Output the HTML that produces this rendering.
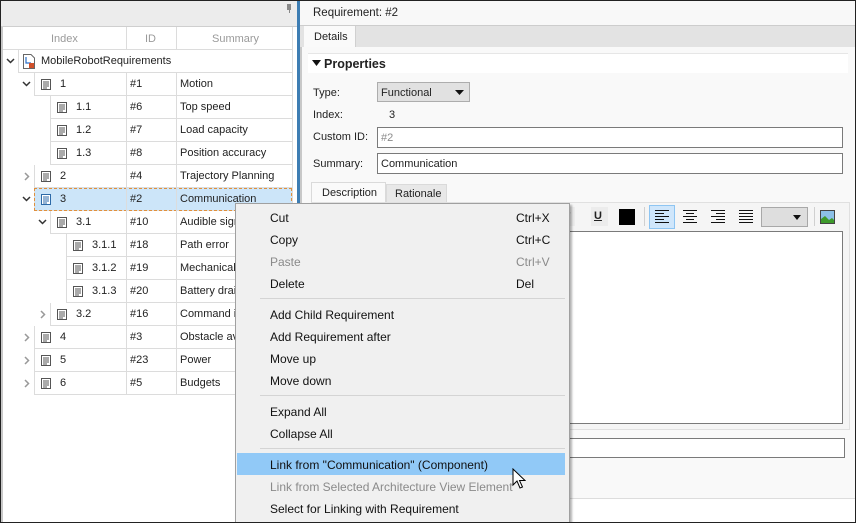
<!DOCTYPE html>
<html><head><meta charset="utf-8"><style>
*{margin:0;padding:0;box-sizing:border-box}
body{width:856px;height:523px;overflow:hidden;background:#fff;font-family:"Liberation Sans",sans-serif;font-size:11px;color:#222;position:relative}
.a{position:absolute}
.t{position:absolute;white-space:nowrap;line-height:14px}
.cell{position:absolute;height:23px;border:1px solid #dcdcdc;border-left:none;border-top:none}
.row{position:absolute;height:23px}
.mi{position:absolute;left:270px;font-size:12px;color:#111;white-space:nowrap;line-height:14px}
.sc{position:absolute;left:516px;font-size:12px;color:#111;line-height:14px}
.dis{color:#8a8a8a}
.sep{position:absolute;left:260px;width:305px;height:1px;background:#d4d4d4}
.inp{position:absolute;background:#fff;border:1px solid #7a7a7a}
</style></head><body>
<!-- outer border -->
<div class="a" style="left:0;top:0;width:856px;height:523px;border:1px solid #222;z-index:50;pointer-events:none"></div>

<!-- LEFT PANEL -->
<div class="a" style="left:1px;top:1px;width:296px;height:26px;background:#ececec;border-bottom:1px solid #cfcfcf"></div>
<div class="a" style="left:287px;top:4px;width:4px;height:6px;background:#888"></div>
<div class="a" style="left:288.5px;top:9px;width:1px;height:4px;background:#888"></div>
<div class="a" style="left:1px;top:27px;width:2px;height:495px;background:#c8c8c8"></div>
<div class="a" style="left:292px;top:27px;width:1px;height:495px;background:#dcdcdc"></div>
<div class="a" style="left:297px;top:0;width:3px;height:523px;background:#3d7db3"></div>

<!-- header -->
<div class="a" style="left:3px;top:27px;width:289px;height:23px;border-bottom:1px solid #dcdcdc"></div>
<div class="a" style="left:126px;top:27px;width:1px;height:23px;background:#dcdcdc"></div>
<div class="a" style="left:176px;top:27px;width:1px;height:23px;background:#dcdcdc"></div>
<div class="t" style="left:51px;top:32px;color:#9a9a9a">Index</div>
<div class="t" style="left:145px;top:32px;color:#9a9a9a">ID</div>
<div class="t" style="left:212px;top:32px;color:#9a9a9a">Summary</div>

<div id="tree"></div>

<!-- RIGHT PANEL -->
<div class="a" style="left:300px;top:0;width:556px;height:26px;background:#f8f8f8;border-bottom:1px solid #cdcdcd"></div>
<div class="t" style="left:313px;top:6px;font-size:11.5px">Requirement: #2</div>
<div class="a" style="left:300px;top:26px;width:556px;height:21px;background:#e3e3e3"></div>
<div class="a" style="left:304px;top:26px;width:52px;height:21px;background:#fafafa;border-right:1px solid #d0d0d0"></div>
<div class="t" style="left:314px;top:30px">Details</div>
<div class="a" style="left:300px;top:47px;width:556px;height:452px;background:#f9f9f9;border-left:2px solid #c8c8c8"></div>
<div class="a" style="left:308px;top:53px;width:540px;height:20px;background:#fff;border-top:1px solid #e6e6e6"></div>
<svg class="a" style="left:312px;top:60px" width="9" height="6"><path d="M0 0H9L4.5 6Z" fill="#111"/></svg>
<div class="t" style="left:324px;top:57px;font-weight:bold;font-size:12.5px">Properties</div>

<div class="t" style="left:313px;top:86px">Type:</div>
<div class="a" style="left:377px;top:82px;width:93px;height:20px;background:#e1e1e1;border:1px solid #adadad"></div>
<div class="t" style="left:381px;top:86px">Functional</div>
<svg class="a" style="left:455px;top:90px" width="9" height="5"><path d="M0 0H9L4.5 5Z" fill="#111"/></svg>
<div class="t" style="left:313px;top:108px">Index:</div>
<div class="t" style="left:389px;top:108px">3</div>
<div class="t" style="left:313px;top:130px">Custom ID:</div>
<div class="inp" style="left:377px;top:127px;width:466px;height:21px"></div>
<div class="t" style="left:381px;top:131px;color:#8a8a8a">#2</div>
<div class="t" style="left:313px;top:157px">Summary:</div>
<div class="inp" style="left:377px;top:153px;width:466px;height:21px"></div>
<div class="t" style="left:381px;top:157px">Communication</div>

<div class="a" style="left:311px;top:182px;width:75px;height:21px;background:#fafafa;border:1px solid #dadada;border-bottom:none"></div>
<div class="t" style="left:322px;top:186px">Description</div>
<div class="a" style="left:386px;top:184px;width:61px;height:19px;background:#e8e8e8;border:1px solid #dadada"></div>
<div class="t" style="left:395px;top:187px">Rationale</div>
<div class="a" style="left:311px;top:202px;width:539px;height:228px;background:#f5f5f5;border:1px solid #e0e0e0"></div>
<div class="a" style="left:312px;top:231px;width:531px;height:193px;background:#fff;border:1px solid #7a7a7a"></div>
<!-- toolbar -->
<div class="a" style="left:563px;top:207px;width:12px;height:19px;background:#ececec"></div>
<div class="t" style="left:567px;top:210px;font-weight:bold;font-style:italic">I</div>
<div class="a" style="left:591px;top:207px;width:17px;height:19px;background:#ececec"></div>
<div class="t" style="left:594px;top:209px;font-weight:bold;text-decoration:underline">U</div>
<div class="a" style="left:619px;top:209px;width:16px;height:16px;background:#000"></div>
<div class="a" style="left:644px;top:207px;width:1px;height:19px;background:#d0d0d0"></div>
<div class="a" style="left:649px;top:205px;width:26px;height:24px;background:#cfe6fb;border:1px solid #8ec5f2"></div>
<svg class="a" style="left:655px;top:210px" width="100" height="14">
<g stroke="#111" stroke-width="1"><path d="M0 .5H14M0 3.5H9M0 6.5H14M0 9.5H9M0 12.5H14"/>
<path d="M28 .5H42M31 3.5H39M28 6.5H42M31 9.5H39M28 12.5H42"/>
<path d="M56 .5H70M61 3.5H70M56 6.5H70M61 9.5H70M56 12.5H70"/>
<path d="M84 .5H98M84 3.5H98M84 6.5H98M84 9.5H98M84 12.5H98"/></g></svg>
<div class="a" style="left:761px;top:207px;width:47px;height:20px;background:#dedede;border:1px solid #a8a8a8"></div>
<svg class="a" style="left:793px;top:215px" width="8" height="5"><path d="M0 0H8L4 5Z" fill="#111"/></svg>
<div class="a" style="left:814px;top:207px;width:1px;height:19px;background:#d0d0d0"></div>
<div class="a" style="left:820px;top:210px;width:15px;height:14px;background:#8cc0e8;border:1px solid #444"></div>
<svg class="a" style="left:821px;top:215px" width="13" height="8"><path d="M0 8V4L4 1L8 5L11 3L13 5V8Z" fill="#3e9a2c"/></svg>

<div class="inp" style="left:560px;top:438px;width:285px;height:20px"></div>
<div class="a" style="left:300px;top:498px;width:556px;height:1px;background:#ddd"></div>
<div class="a" style="left:302px;top:499px;width:552px;height:24px;background:#fff"></div>

<!-- CONTEXT MENU -->
<div class="a" style="left:235px;top:203px;width:335px;height:320px;background:#f0f0f0;border:1px solid #a0a0a0;box-shadow:2px 2px 2px rgba(0,0,0,.3)"></div>
<div class="mi" style="top:211px">Cut</div><div class="sc" style="top:211px">Ctrl+X</div>
<div class="mi" style="top:233px">Copy</div><div class="sc" style="top:233px">Ctrl+C</div>
<div class="mi dis" style="top:255px">Paste</div><div class="sc dis" style="top:255px">Ctrl+V</div>
<div class="mi" style="top:277px">Delete</div><div class="sc" style="top:277px">Del</div>
<div class="sep" style="top:298px"></div>
<div class="mi" style="top:308px">Add Child Requirement</div>
<div class="mi" style="top:330px">Add Requirement after</div>
<div class="mi" style="top:352px">Move up</div>
<div class="mi" style="top:374px">Move down</div>
<div class="sep" style="top:395px"></div>
<div class="mi" style="top:405px">Expand All</div>
<div class="mi" style="top:427px">Collapse All</div>
<div class="sep" style="top:448px"></div>
<div class="a" style="left:237px;top:453px;width:328px;height:22px;background:#91c9f7"></div>
<div class="mi" style="top:458px">Link from "Communication" (Component)</div>
<div class="mi dis" style="top:480px">Link from Selected Architecture View Element</div>
<div class="mi" style="top:502px">Select for Linking with Requirement</div>
<svg class="a" style="left:512px;top:468px;z-index:20" width="14" height="22"><path d="M1 1V17L5 13L8 20L10.5 19L7.5 12.5H13Z" fill="#fff" stroke="#000" stroke-width="1"/></svg>

<script>
var rows=[
[0,'v','','MobileRobotRequirements','',0,1],
[1,'v','1','#1','Motion'],
[2,'','1.1','#6','Top speed'],
[2,'','1.2','#7','Load capacity'],
[2,'','1.3','#8','Position accuracy'],
[1,'>','2','#4','Trajectory Planning'],
[1,'v','3','#2','Communication',1],
[2,'v','3.1','#10','Audible signals'],
[3,'','3.1.1','#18','Path error'],
[3,'','3.1.2','#19','Mechanical'],
[3,'','3.1.3','#20','Battery drain'],
[2,'>','3.2','#16','Command i'],
[1,'>','4','#3','Obstacle av'],
[1,'>','5','#23','Power'],
[1,'>','6','#5','Budgets']];
var h='';
rows.forEach(function(r,i){
 var y=50+23*i,L=r[0],x=18+16*L;
 if(r[6]){
  h+='<div class="a" style="left:'+x+'px;top:'+y+'px;width:'+(292-x)+'px;height:23px;border:1px solid #dcdcdc;border-top:none;border-right:none"></div>';
  h+='<svg class="a" style="left:'+(x+5)+'px;top:'+(y+4)+'px" width="12" height="15"><path d="M.5 .5H8L11.5 4V14.5H.5Z" fill="#fff" stroke="#666"/><path d="M3 3V9H8" fill="none" stroke="#2a6fc9" stroke-width="1.2"/><rect x="6" y="9" width="5" height="5" fill="#d0502a"/></svg>';
  h+='<div class="t" style="left:'+(x+23)+'px;top:'+(y+4)+'px">'+r[3]+'</div>';
 } else {
  var bg=r[5]?'#cce5f9':'#fff';
  h+='<div class="a" style="left:'+x+'px;top:'+y+'px;width:'+(292-x)+'px;height:23px;background:'+bg+';border-left:1px solid #dcdcdc;border-bottom:1px solid #dcdcdc'+(r[5]?';outline:1px dashed #e0903c;outline-offset:-1px':'')+'"></div>';
  h+='<div class="a" style="left:126px;top:'+y+'px;width:1px;height:23px;background:#dcdcdc"></div>';
  h+='<div class="a" style="left:176px;top:'+y+'px;width:1px;height:23px;background:#dcdcdc"></div>';
  var ic=r[5]?'#2d6aa8':'#555';
  h+='<svg class="a" style="left:'+(x+7)+'px;top:'+(y+6)+'px" width="10" height="11"><rect x=".5" y=".5" width="9" height="10" fill="#fff" stroke="'+ic+'"/><path d="M2 3H8M2 5H8M2 7H8M2 9H6" stroke="'+ic+'"/></svg>';
  h+='<div class="t" style="left:'+(x+26)+'px;top:'+(y+4)+'px">'+r[2]+'</div>';
  h+='<div class="t" style="left:130px;top:'+(y+4)+'px">'+r[3]+'</div>';
  h+='<div class="t" style="left:180px;top:'+(y+4)+'px">'+r[4]+'</div>';
 }
 if(r[1]=='v') h+='<svg class="a" style="left:'+(x-12)+'px;top:'+(y+8)+'px" width="9" height="6"><path d="M1 1L4.5 4.5L8 1" fill="none" stroke="#333" stroke-width="1.5"/></svg>';
 if(r[1]=='>') h+='<svg class="a" style="left:'+(x-10)+'px;top:'+(y+7)+'px" width="6" height="9"><path d="M1 1L4.5 4.5L1 8" fill="none" stroke="#999" stroke-width="1.5"/></svg>';
});
document.getElementById('tree').innerHTML=h;
</script>
</body></html>
